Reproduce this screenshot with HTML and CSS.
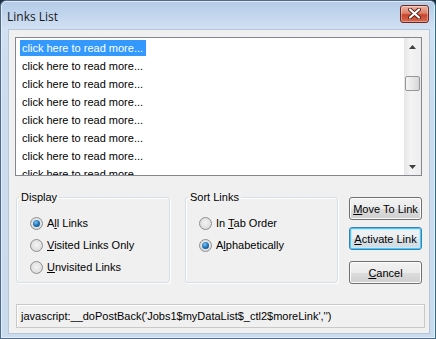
FILE: index.html
```html
<!DOCTYPE html>
<html>
<head>
<meta charset="utf-8">
<title>Links List</title>
<link rel="stylesheet" href="styles.css">
</head>
<body>
<div class="window">
  <div class="titlebar">
    <span class="title">Links List</span>
    <span class="close">
      <svg width="13" height="11" viewBox="0 0 13 11">
        <path d="M2 1.5 L11 9.5 M11 1.5 L2 9.5" stroke="#5a1c14" stroke-width="4" stroke-linecap="round"/>
        <path d="M2 1.5 L11 9.5 M11 1.5 L2 9.5" stroke="#ffffff" stroke-width="2.2" stroke-linecap="round"/>
      </svg>
    </span>
  </div>
  <div class="client">
    <div class="listbox">
      <ul class="items">
        <li class="item selected"><span>click here to read more...</span></li>
        <li class="item"><span>click here to read more...</span></li>
        <li class="item"><span>click here to read more...</span></li>
        <li class="item"><span>click here to read more...</span></li>
        <li class="item"><span>click here to read more...</span></li>
        <li class="item"><span>click here to read more...</span></li>
        <li class="item"><span>click here to read more...</span></li>
        <li class="item"><span>click here to read more...</span></li>
      </ul>
      <div class="scrollbar">
        <span class="sb-btn"><svg width="7" height="4" viewBox="0 0 7 4"><path d="M0 4 L3.5 0 L7 4 Z" fill="#404040"/></svg></span>
        <span class="track"><span class="thumb"></span></span>
        <span class="sb-btn"><svg width="7" height="4" viewBox="0 0 7 4"><path d="M0 0 L3.5 4 L7 0 Z" fill="#404040"/></svg></span>
      </div>
    </div>
    <div class="lower">
      <fieldset class="group display">
        <legend>Display</legend>
        <div class="radio checked"><span class="dot"></span><span class="label">A<u>l</u>l Links</span></div>
        <div class="radio"><span class="dot"></span><span class="label"><u>V</u>isited Links Only</span></div>
        <div class="radio"><span class="dot"></span><span class="label"><u>U</u>nvisited Links</span></div>
      </fieldset>
      <fieldset class="group sort">
        <legend>Sort Links</legend>
        <div class="radio"><span class="dot"></span><span class="label">In <u>T</u>ab Order</span></div>
        <div class="radio checked"><span class="dot"></span><span class="label">A<u>l</u>phabetically</span></div>
      </fieldset>
      <div class="buttons">
        <span class="btn"><span><u>M</u>ove To Link</span></span>
        <span class="btn focused"><span><u>A</u>ctivate Link</span></span>
        <span class="btn cancel"><span><u>C</u>ancel</span></span>
      </div>
    </div>
    <div class="status">javascript:__doPostBack('Jobs1$myDataList$_ctl2$moreLink','')</div>
  </div>
</div>
</body>
</html>
```
FILE: styles.css
```css
* { box-sizing: border-box; }
html, body { margin: 0; padding: 0; }
body {
  width: 436px;
  height: 339px;
  overflow: hidden;
  background: #1e2c3c;
  font-family: "Liberation Sans", Arial, sans-serif;
  font-size: 11px;
  color: #000;
}
.window {
  width: 436px;
  height: 339px;
  border: 1px solid #4e6a8c;
  border-right-color: #2f6f86;
  border-radius: 6px 6px 0 0;
  background: linear-gradient(#b3cae6 0px, #c2d6ee 14px, #d2e1f3 28px, #cddcee 60px, #cbdbee 100%);
  display: flex;
  flex-direction: column;
  box-shadow: inset 0 0 0 1px #e3edf8;
}
.titlebar {
  height: 28px;
  display: flex;
  align-items: center;
  justify-content: space-between;
  padding: 0 6px 0 6px;
}
.title {
  font-family: "Open Sans", "Noto Sans", sans-serif;
  font-size: 12px;
  color: #1a1a1a;
  margin-top: 2px;
}
.close {
  width: 29px;
  height: 18px;
  margin-top: -3px;
  border: 1px solid #6b2a22;
  border-radius: 3px;
  background: linear-gradient(#eeb3a3 0%, #dd8268 45%, #c9452c 55%, #d86a50 100%);
  box-shadow: inset 0 0 0 1px rgba(255,255,255,0.35);
  display: flex;
  align-items: center;
  justify-content: center;
}
.client {
  margin: 0 5px 0 7px;
  height: 305px;
  background: #f0f0f0;
  border: 1px solid #b4c6dc;
  padding: 7px 0 0 6px;
}
.listbox {
  width: 407px;
  height: 139px;
  border: 1px solid #828790;
  background: #fff;
  display: flex;
  overflow: hidden;
}
.items {
  list-style: none;
  margin: 0;
  padding: 1px 0 0 4px;
  flex: 1;
}
.item {
  height: 18px;
  display: flex;
  align-items: center;
}
.item span {
  line-height: 16px;
  padding: 0 3px 0 2px;
}
.item.selected span {
  background: #3399ff;
  color: #fff;
}
.scrollbar {
  width: 17px;
  display: flex;
  flex-direction: column;
  background: linear-gradient(90deg, #e6e6e6, #f4f4f4 40%, #ececec);
}
.sb-btn {
  height: 17px;
  display: flex;
  align-items: center;
  justify-content: center;
}
.track {
  flex: 1;
  padding-top: 21px;
}
.thumb {
  display: block;
  width: 15px;
  height: 15px;
  margin-left: 1px;
  border: 1px solid #979797;
  border-radius: 2px;
  background: linear-gradient(90deg, #f4f4f4, #e8e8e8 50%, #d6d6d6);
}
.lower {
  display: flex;
  align-items: flex-start;
  height: 92px;
  margin-top: 15px;
  margin-left: 1px;
}
.group {
  margin: 0;
  height: 92px;
  border: 1px solid #d5dfe5;
  border-radius: 3px;
  box-shadow: inset 1px 1px 0 #fff, 1px 1px 0 #fff;
  padding: 8px 0 0 13px;
}
.group legend {
  padding: 0 2px;
  margin-left: -11px;
  line-height: 13px;
  color: #000;
}
.display { width: 154px; }
.sort { width: 153px; margin-left: 15px; }
.radio {
  height: 22px;
  display: flex;
  align-items: center;
}
.dot {
  width: 13px;
  height: 13px;
  border-radius: 50%;
  border: 1px solid #8e8f8f;
  background: radial-gradient(circle at 50% 45%, #f4f4f4 0, #e2e2e2 55%, #cfcfcf 100%);
  margin-right: 4px;
  display: flex;
  align-items: center;
  justify-content: center;
}
.radio.checked .dot::after {
  content: "";
  width: 7px;
  height: 7px;
  border-radius: 50%;
  background: radial-gradient(circle at 40% 35%, #7cc4ee 0, #1e73b8 50%, #0b3f74 100%);
}
.buttons {
  margin-left: 11px;
  margin-top: 6px;
  display: flex;
  flex-direction: column;
}
.btn {
  width: 73px;
  height: 23px;
  border: 1px solid #707070;
  border-radius: 3px;
  background: linear-gradient(#f2f2f2 0%, #ebebeb 50%, #dddddd 51%, #cfcfcf 100%);
  box-shadow: inset 0 0 0 1px #fcfcfc;
  display: flex;
  align-items: center;
  justify-content: center;
}
.btn.focused {
  margin-top: 7px;
  border-color: #3c7fb1;
  box-shadow: inset 0 0 0 1px #48c8f5, inset 0 0 0 2px #c4e9f8;
  background: linear-gradient(#f1f4f6 0%, #e9eef1 50%, #dbe3e8 51%, #cfd9df 100%);
}
.btn.cancel { margin-top: 11px; }
.status {
  width: 409px;
  height: 24px;
  margin-top: 21px;
  margin-left: 1px;
  border: 1px solid #c9c9c9;
  box-shadow: inset 1px 1px 0 #fff;
  display: flex;
  align-items: center;
  padding-left: 4px;
}
```
